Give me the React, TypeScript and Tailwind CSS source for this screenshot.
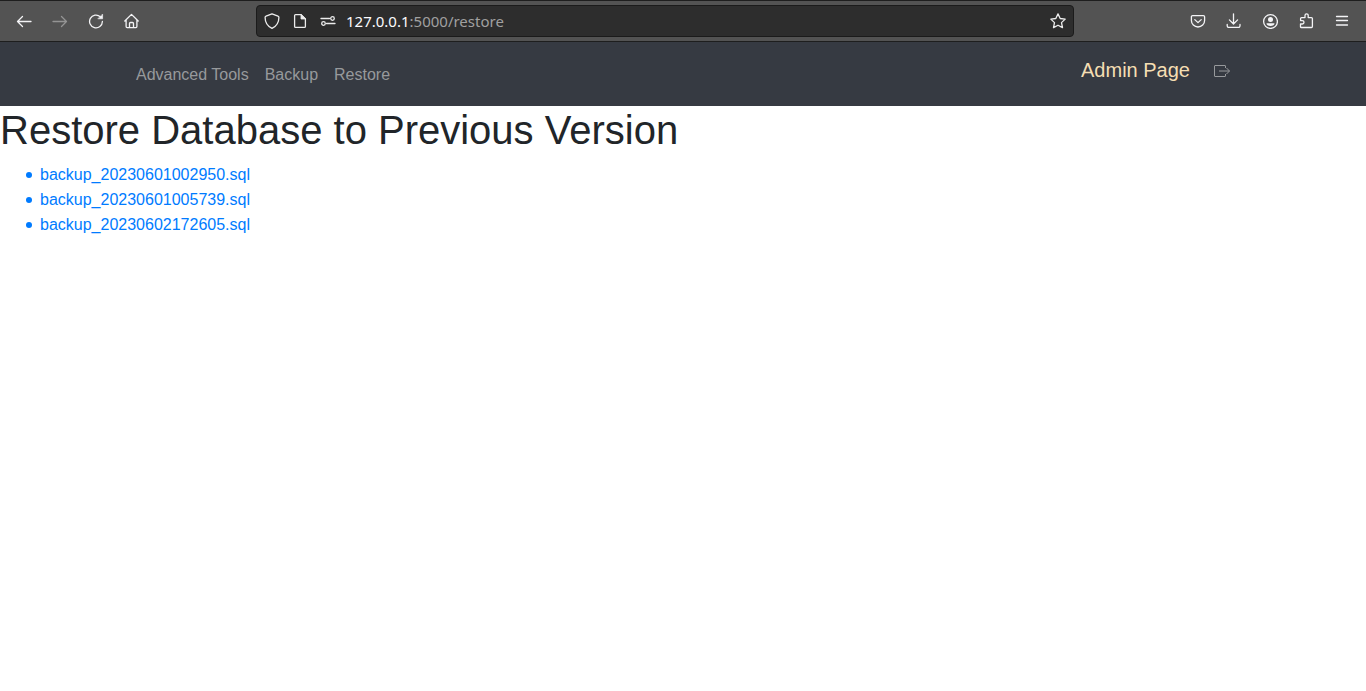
import type { ReactNode } from 'react';

type IconProps = { label: string; children: ReactNode; className?: string };

function Glyph({ children }: { children: ReactNode }) {
  return (
    <svg
      viewBox="0 0 16 16"
      className="size-4"
      fill="none"
      stroke="currentColor"
      strokeWidth="1.3"
      strokeLinecap="round"
      strokeLinejoin="round"
      aria-hidden="true"
    >
      {children}
    </svg>
  );
}

function ToolbarButton({ label, children, className = 'text-[#f4f4f6]' }: IconProps) {
  return (
    <button type="button" aria-label={label} className={`flex h-8 w-9 shrink-0 items-center justify-center ${className}`}>
      <Glyph>{children}</Glyph>
    </button>
  );
}

function UrlButton({ label, children }: IconProps) {
  return (
    <button type="button" aria-label={label} className="flex h-7 w-7 shrink-0 items-center justify-center text-[#ececec]">
      <Glyph>{children}</Glyph>
    </button>
  );
}

function BrowserToolbar() {
  return (
    <div className="flex h-[42px] items-center border-y border-[#1e1e1e] bg-[#535353] px-1.5">
      <ToolbarButton label="Back">
        <path d="M15 8.5H1.5M6.5 3.5l-5 5 5 5" />
      </ToolbarButton>
      <ToolbarButton label="Forward" className="text-[#949494]">
        <path d="M1 8.5h13.5M9.5 3.5l5 5-5 5" />
      </ToolbarButton>
      <ToolbarButton label="Reload">
        <path d="M14.4 8.5a6.4 6.4 0 1 1-2.1-4.8" />
        <path d="M14.6 1.4v4.4h-4.4z" fill="currentColor" strokeWidth="0.6" />
      </ToolbarButton>
      <ToolbarButton label="Home">
        <path d="M.8 8L7.500 1.400 14.200 8M2.100 7v6.600a1 1 0 0 0 1 1h8.800a1 1 0 0 0 1-1V7M5.500 14.500v-4a1 1 0 0 1 1-1h2a1 1 0 0 1 1 1v4" />
      </ToolbarButton>
      <div className="flex-1" />
      <div className="flex h-8 w-[818px] items-center rounded border border-[#1b1b1b] bg-[#2d2d2d] px-px">
        <UrlButton label="Tracking protection">
          <path d="M8 .8l6 2.400c.6.2.9.6.9 1.200 0 4.600-2.200 8.600-6.900 10.900C3.300 13 1.100 9 1.100 4.400c0-.6.3-1 .9-1.200z" />
        </UrlButton>
        <UrlButton label="Page information">
          <path d="M3.600 1.600h5.400l4.400 4.400v7.400a1 1 0 0 1-1 1H3.600a1 1 0 0 1-1-1V2.600a1 1 0 0 1 1-1z" />
          <path d="M9 1.600V6h4.400z" fill="currentColor" strokeWidth="0.8" />
        </UrlButton>
        <UrlButton label="Site permissions">
          <path d="M1 5.500h8.500M6.500 10.500H15" />
          <circle cx="12.500" cy="5.500" r="1.800" />
          <circle cx="3.500" cy="10.500" r="1.800" />
        </UrlButton>
        <div
          role="textbox"
          aria-label="Address"
          contentEditable
          suppressContentEditableWarning
          spellCheck={false}
          className="flex-1 whitespace-nowrap pl-1 font-['Noto_Sans',sans-serif] text-[15px] leading-5 text-[#a0a0a0] outline-none"
        >
          <span className="text-[#fbfbfe]">127.0.0.1</span>:5000/restore
        </div>
        <UrlButton label="Bookmark this page">
          <path d="M8 .9l2.200 4.600 5 .6-3.700 3.500 1 5L8 12.200l-4.500 2.400 1-5L.8 6.100l5-.6z" />
        </UrlButton>
      </div>
      <div className="flex-1" />
      <ToolbarButton label="Save to Pocket">
        <path d="M2.600 2.600h10.800a1.200 1.200 0 0 1 1.200 1.200v3.600a6.600 6.600 0 0 1-13.200 0V3.800a1.200 1.200 0 0 1 1.200-1.200zM4.800 6.600L8 9.600l3.200-3" />
      </ToolbarButton>
      <ToolbarButton label="Downloads">
        <path d="M7.500 .8v10M3.400 6.900l4.100 4.100 4.100-4.100M1.200 11.500v1.300a1.600 1.600 0 0 0 1.600 1.600h9.600a1.600 1.600 0 0 0 1.600-1.600v-1.300" />
      </ToolbarButton>
      <ToolbarButton label="Account">
        <circle cx="8.500" cy="8.500" r="6.900" />
        <circle cx="8.500" cy="6.500" r="2.500" fill="currentColor" stroke="none" />
        <path d="M4.500 10.200h8c0 1.700-1.700 2.800-4 2.800s-4-1.100-4-2.800z" fill="currentColor" stroke="none" />
      </ToolbarButton>
      <ToolbarButton label="Extensions">
        <path d="M3 14.500h10.400a1 1 0 0 0 1-1V5.600a1 1 0 0 0-1-1H10.200V2.400a1.600 1.600 0 0 0-3.200 0v2.200H3.600a1 1 0 0 0-1 1v2h1.700a1.700 1.700 0 0 1 0 3.400H2.500v3a.5.500 0 0 0 .5.500z" />
      </ToolbarButton>
      <ToolbarButton label="Open application menu">
        <path d="M2.500 3.500h11M2.500 7.500h11M2.500 12h11" />
      </ToolbarButton>
    </div>
  );
}

const tools = ['Advanced Tools', 'Backup', 'Restore'];
const backups = ['backup_20230601002950.sql', 'backup_20230601005739.sql', 'backup_20230602172605.sql'];

function Navbar() {
  return (
    <nav className="h-16 bg-[#363a42]">
      <div className="mx-auto flex max-w-[1140px] items-start justify-between px-[15px] pt-3">
        <ul className="flex pt-2">
          {tools.map((name) => (
            <li key={name}>
              <a href="#" className="block px-2 leading-[26px] text-[#97999c]">{name}</a>
            </li>
          ))}
        </ul>
        <div className="flex items-center gap-6 px-2">
          <a href="#" className="text-xl leading-8 text-[#f5deb3]">Admin Page</a>
          <a href="#" aria-label="Log out" className="text-[#97999c]">
            <svg viewBox="0 0 16 16" className="size-4" fill="none" stroke="currentColor" aria-hidden="true">
              <path d="M11.500 6V4a.5.500 0 0 0-.5-.5H1a.5.500 0 0 0-.5.500v10a.5.500 0 0 0 .5.500h10a.5.500 0 0 0 .5-.5v-2" />
              <path d="M5 9h10.500M12.500 6l3 3-3 3" />
            </svg>
          </a>
        </div>
      </div>
    </nav>
  );
}

export default function App() {
  return (
    <div className="min-h-screen bg-white font-['Liberation_Sans',Arial,sans-serif] text-base text-[#212529]">
      <BrowserToolbar />
      <Navbar />
      <main>
        <h1 className="mb-2 text-[40px] leading-12">Restore Database to Previous Version</h1>
        <ul className="pl-[26px] text-[#007bff]">
          {backups.map((file) => (
            <li key={file} className="flex items-center gap-2 leading-[25px] before:size-1.5 before:rounded-full before:bg-[#007bff]">
              <a href="#">{file}</a>
            </li>
          ))}
        </ul>
      </main>
    </div>
  );
}
